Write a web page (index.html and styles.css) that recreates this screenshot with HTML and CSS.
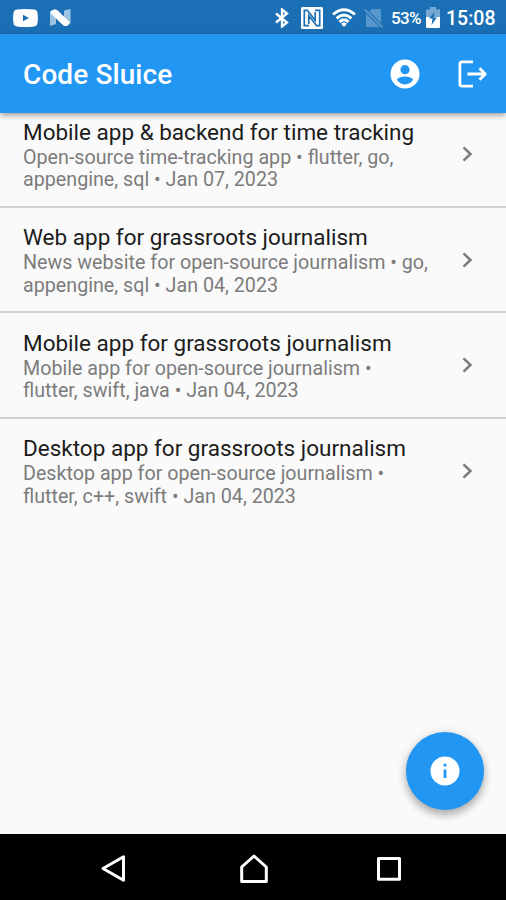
FILE: index.html
```html
<!DOCTYPE html>
<html lang="en">
<head>
  <meta charset="UTF-8">
  <meta name="viewport" content="width=device-width, initial-scale=1.0">
  <title>Code Sluice</title>
  <link rel="stylesheet" href="styles.css">
</head>
<body>
  <div class="phone">
    <div class="status-bar">
      <svg class="youtube" width="25" height="18" viewBox="0 0 25 18">
        <path fill="#fff" d="M4 .6Q12.500-.5 21 .6Q24 .8 24.500 4Q25.300 9 24.500 14Q24 17.200 21 17.400Q12.500 18.500 4 17.400Q1 17.200.5 14Q-.3 9 .5 4Q1 .8 4 .6Z"/>
        <path fill="#1b70b5" d="M10 5.800v6.400l6-3.200z"/>
      </svg>
      <svg class="nougat" width="21" height="18" viewBox="0 0 21 18">
        <path fill="#9dc3e2" d="M0 3l6 3v9l-6 2zM14 1.500L20.500 0v14.500l-6.500-2z"/>
        <path fill="#fff" d="M0 3.500Q1.500 0 6 .5Q7.500 1 9 2.800L20 13.500Q18.500 17.500 15 17Q13.500 16.700 12 15.200z"/>
      </svg>
      <div class="status-right">
        <svg class="bluetooth" width="14" height="20" viewBox="0 0 14 20">
          <path fill="none" stroke="#fff" stroke-width="2.300" d="M1 5.500l11 9L7 18.500v-17l5 4-11 9"/>
        </svg>
        <svg class="nfc" width="22" height="22" viewBox="0 0 22 22">
          <rect width="22" height="22" rx="1.500" fill="#fff"/>
          <path fill="none" stroke="#1b70b5" stroke-width="1.700" d="M8 18.700H3.300V3.300H6.500L14.200 13.500V5M14 3.300h4.700v15.400h-3.200L7.800 8.500V17"/>
        </svg>
        <svg class="wifi" width="24" height="19" viewBox="0 0 24 19">
          <g fill="none" stroke="#fff" stroke-width="2.900">
            <path d="M1 6.500Q12-3.200 23 6.500"/>
            <path d="M4.500 10.300Q12 3.700 19.500 10.300"/>
            <path d="M7.500 13.800Q12 9.800 16.500 13.800"/>
          </g>
          <path fill="#fff" d="M9 15.700Q12 13.200 15 15.700L12 19z"/>
        </svg>
        <svg class="no-sim" width="20" height="20" viewBox="0 0 20 20">
          <path fill="#5897cb" d="M8 1H17v14L5.500 3.500zM2 5.500L15.500 19H2z"/>
          <path fill="none" stroke="#5897cb" stroke-width="1.800" d="M.7 1.500L18.500 19.400"/>
        </svg>
        <span class="percent">53%</span>
        <svg class="battery" width="14" height="21" viewBox="0 0 14 21">
          <path fill="#76aad5" d="M4 0h6v2.500h4V11H0V2.500h4z"/>
          <path fill="#fff" d="M0 10h14v9.500q0 1.500-1.500 1.500h-11Q0 21 0 19.500z"/>
          <path fill="#1b70b5" d="M3 11.500h3.500L5.500 18l5.500-7.500H7.700L8.500 5z"/>
        </svg>
        <span class="clock">15:08</span>
      </div>
    </div>

    <header class="app-bar">
      <h1>Code Sluice</h1>
      <svg class="account" width="30" height="30" viewBox="0 0 30 30">
        <circle cx="15" cy="15" r="14.500" fill="#fff"/>
        <circle cx="15" cy="10.700" r="4.600" fill="#2196f3"/>
        <path fill="#2196f3" d="M6.800 20.800Q9.500 17.500 15 17.500t8.200 3.300Q20 25.400 15 25.400t-8.200-4.600z"/>
      </svg>
      <svg class="logout" width="30" height="28" viewBox="0 0 30 28">
        <path fill="none" stroke="#fff" stroke-width="2.800" stroke-linejoin="round" d="M15 1.900H4Q1.900 1.900 1.900 4v20q0 2.100 2.100 2.100h11M9.500 14H27M21.500 8.200L27.300 14l-5.800 5.800"/>
      </svg>
    </header>

    <main>
      <ul class="projects">
        <li class="project">
          <div class="text">
            <h2>Mobile app &amp; backend for time tracking</h2>
            <p>Open-source time-tracking app • flutter, go,<br>appengine, sql • Jan 07, 2023</p>
          </div>
          <svg class="chevron" width="11" height="16" viewBox="0 0 11 16"><path d="M1.500 1.300L8.500 8l-7 6.700"/></svg>
        </li>
        <li class="project">
          <div class="text">
            <h2>Web app for grassroots journalism</h2>
            <p>News website for open-source journalism • go,<br>appengine, sql • Jan 04, 2023</p>
          </div>
          <svg class="chevron" width="11" height="16" viewBox="0 0 11 16"><path d="M1.500 1.300L8.500 8l-7 6.700"/></svg>
        </li>
        <li class="project">
          <div class="text">
            <h2>Mobile app for grassroots journalism</h2>
            <p>Mobile app for open-source journalism •<br>flutter, swift, java • Jan 04, 2023</p>
          </div>
          <svg class="chevron" width="11" height="16" viewBox="0 0 11 16"><path d="M1.500 1.300L8.500 8l-7 6.700"/></svg>
        </li>
        <li class="project">
          <div class="text">
            <h2>Desktop app for grassroots journalism</h2>
            <p>Desktop app for open-source journalism •<br>flutter, c++, swift • Jan 04, 2023</p>
          </div>
          <svg class="chevron" width="11" height="16" viewBox="0 0 11 16"><path d="M1.500 1.300L8.500 8l-7 6.700"/></svg>
        </li>
      </ul>
      <button type="button" class="fab" aria-label="Info">
        <svg width="30" height="30" viewBox="0 0 30 30">
          <circle cx="15" cy="15" r="14.500" fill="#fff"/>
          <path fill="#2196f3" d="M13.600 7.800h2.800v2.800h-2.800zM13.600 13.500h2.800v8.500h-2.800z"/>
        </svg>
      </button>
    </main>

    <nav class="nav-bar">
      <svg width="28" height="32" viewBox="0 0 28 32"><path d="M24.500 3.800v23.400L4 15.500z"/></svg>
      <svg class="home" width="32" height="32" viewBox="0 0 32 32"><path d="M16 3L28.300 14v14.500H3.700V14z"/></svg>
      <svg width="28" height="32" viewBox="0 0 28 32"><path d="M3.500 5.500h21v20.800h-21z"/></svg>
    </nav>
  </div>
</body>
</html>
```
FILE: styles.css
```css
* {
  box-sizing: border-box;
}
body {
  margin: 0;
  font-family: Roboto, "Liberation Sans", sans-serif;
}
.phone {
  width: 506px;
  height: 900px;
  display: flex;
  flex-direction: column;
  overflow: hidden;
  background: #fafafa;
}
svg {
  display: block;
  flex: none;
}

.status-bar {
  height: 34px;
  flex: none;
  display: flex;
  align-items: center;
  padding: 1px 11px 0 13px;
  background: #1b70b5;
  color: #fff;
}
.nougat {
  margin-left: 12px;
}
.status-right {
  margin-left: auto;
  display: flex;
  align-items: center;
}
.nfc {
  margin-left: 12px;
}
.wifi {
  margin-left: 9px;
}
.no-sim {
  margin-left: 8px;
}
.percent {
  width: 30px;
  margin-left: 7px;
  font-size: 17px;
  font-weight: 500;
  letter-spacing: -0.6px;
  white-space: nowrap;
}
.battery {
  margin-left: 5px;
}
.clock {
  width: 49px;
  margin-left: 6px;
  padding-top: 2px;
  font-size: 19.5px;
  font-weight: 500;
  white-space: nowrap;
}

.app-bar {
  height: 79px;
  flex: none;
  display: flex;
  align-items: center;
  padding: 0 18px 0 23px;
  background: #2196f3;
  color: #fff;
  box-shadow: 0 2px 6px rgba(0, 0, 0, 0.4);
  z-index: 1;
}
.app-bar h1 {
  margin: 0 auto 0 0;
  padding-top: 2px;
  font-size: 28px;
  font-weight: 500;
  letter-spacing: 0.1px;
}
.logout {
  margin-left: 38px;
}

main {
  flex: 1;
  min-height: 0;
  position: relative;
}
.projects {
  margin: -11px 0 0;
  padding: 0;
  list-style: none;
}
.project {
  height: 105.500px;
  display: flex;
  align-items: center;
  justify-content: space-between;
  padding: 1px 33px 0 23px;
  border-bottom: 2px solid #d2d2d2;
}
.project:last-child {
  border-bottom-color: transparent;
}
.project .text {
  padding-top: 2px;
}
.project h2 {
  margin: 0;
  font-size: 22.500px;
  font-weight: 400;
  line-height: 26px;
  color: #1c1c1c;
  white-space: nowrap;
}
.project p {
  margin: 2px 0 0;
  font-size: 19.700px;
  line-height: 22.700px;
  color: #7c7c7c;
  white-space: nowrap;
}
.chevron path {
  fill: none;
  stroke: #7c7c7c;
  stroke-width: 2.500;
}

.fab {
  position: absolute;
  right: 22px;
  bottom: 24px;
  width: 78px;
  height: 78px;
  display: flex;
  align-items: center;
  justify-content: center;
  padding: 0;
  border: 0;
  border-radius: 50%;
  background: #2196f3;
  box-shadow: 0 5px 8px rgba(0, 0, 0, 0.28), 0 1px 12px rgba(0, 0, 0, 0.1);
}

.nav-bar {
  height: 66px;
  flex: none;
  display: flex;
  align-items: center;
  justify-content: space-between;
  padding: 4px 103px 0 99px;
  background: #000;
}
.nav-bar path {
  fill: none;
  stroke: #fff;
  stroke-width: 3;
  stroke-linejoin: round;
}
.nav-bar .home {
  margin-left: 5px;
}
```
